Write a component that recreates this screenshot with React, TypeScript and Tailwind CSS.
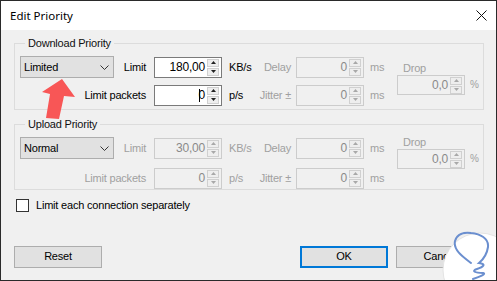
import React from "react";

const F = { fontFamily: '"Liberation Sans", Arial, sans-serif' };

function Arrow({ up, disabled }: { up?: boolean; disabled?: boolean }) {
  const c = disabled ? "#a8a8a8" : "#222";
  return (
    <div className="w-[12px] h-[8px] border border-[#d0d0d0] bg-[#eeeeee] flex items-center justify-center">
      <svg width="5" height="3" viewBox="0 0 5 3">
        {up ? <polygon points="2.5,0 5,3 0,3" fill={c} /> : <polygon points="0,0 5,0 2.5,3" fill={c} />}
      </svg>
    </div>
  );
}

function Spin({ value, disabled, caret, h = "h-[21px]" }: { value: string; disabled?: boolean; caret?: boolean; h?: string }) {
  return (
    <div
      className={`flex items-center w-[68px] ${h} border ${
        disabled ? "border-[#cccccc] bg-[#f0f0f0] text-[#8a8a8a]" : "border-[#7a7a7a] bg-white text-black"
      }`}
    >
      <span className="flex-1 flex justify-end items-center pr-[2px] text-[12px] leading-none tracking-[-0.2px]">
        {caret && <span className="w-[1px] h-[13px] bg-black mr-[-1px]" />}
        {value}
      </span>
      <div className="flex flex-col gap-[1px] mr-[2px]">
        <Arrow up disabled={disabled} />
        <Arrow disabled={disabled} />
      </div>
    </div>
  );
}

function Combo({ label }: { label: string }) {
  return (
    <div className="w-[94px] h-[22px] border border-[#adadad] bg-[#e1e1e1] flex items-center pl-[3px] pr-[4px] text-[11px]">
      <span className="flex-1">{label}</span>
      <svg width="9" height="5" viewBox="0 0 9 5">
        <polyline points="0.5,0.5 4.5,4.5 8.5,0.5" fill="none" stroke="#333" strokeWidth="1" />
      </svg>
    </div>
  );
}

function Group({
  title,
  combo,
  limit,
  enabled,
  caret,
  dropPt,
  rowGap,
  pb,
}: {
  title: string;
  combo: string;
  limit: string;
  enabled: boolean;
  caret?: boolean;
  dropPt: string;
  rowGap: string;
  pb: string;
}) {
  const lab = enabled ? "text-black" : "text-[#a0a0a0]";
  const dis = "text-[#a0a0a0]";
  return (
    <fieldset className={`mx-[13px] border border-[#dcdcdc] pl-[5px] pt-[6px] ${pb}`}>
      <legend className="ml-[5px] px-[3px] text-[11px] leading-[14px] text-[#111]">{title}</legend>
      <div
        className={`grid grid-cols-[94px_40px_68px_37px_37px_68px_33px_68px_18px] grid-rows-[22px_22px] ${rowGap} items-center text-[11px] leading-[14px] whitespace-nowrap`}
      >
        <div className="h-[22px] flex items-center">
          <Combo label={combo} />
        </div>
        <div className={`text-right pr-[8px] ${lab}`}>Limit</div>
        <Spin value={limit} disabled={!enabled} />
        <div className={`pl-[7px] ${lab}`}>KB/s</div>
        <div className={`text-right pr-[5px] ${dis}`}>Delay</div>
        <Spin value="0" disabled />
        <div className={`pl-[6px] ${dis}`}>ms</div>
        <div className={`row-span-2 self-start flex flex-col ${dropPt}`}>
          <div className={`pl-[6px] leading-[14px] ${dis}`}>Drop</div>
          <Spin value="0,0" disabled h="h-[20px]" />
        </div>
        <div className={`row-span-2 self-start flex flex-col ${dropPt}`}>
          <div className="h-[14px]" />
          <div className={`h-[20px] flex items-center pl-[5px] text-[10px] ${dis}`}>%</div>
        </div>

        <div className={`col-span-2 text-right pr-[8px] ${lab}`}>Limit packets</div>
        <Spin value="0" disabled={!enabled} caret={caret} />
        <div className={`pl-[7px] ${lab}`}>p/s</div>
        <div className={`text-right pr-[5px] ${dis}`}>Jitter ±</div>
        <Spin value="0" disabled />
        <div className={`pl-[6px] ${dis}`}>ms</div>
      </div>
    </fieldset>
  );
}

function Button({ label, primary }: { label: string; primary?: boolean }) {
  return (
    <div
      className={`w-[88px] h-[22px] flex items-center justify-center bg-[#e1e1e1] text-[11px] ${
        primary ? "border-2 border-[#0078d7]" : "border border-[#adadad]"
      }`}
    >
      {label}
    </div>
  );
}

export default function App() {
  return (
    <div
      className="relative w-[497px] h-[281px] overflow-hidden border border-[#2a2a2a] bg-[#f0f0f0] text-black"
      style={F}
    >
      <div className="h-[29px] bg-white flex items-center justify-between pl-[9px] pr-[9px]">
        <span className="text-[11.5px]" style={{ fontFamily: '"Noto Sans", "Liberation Sans", sans-serif' }}>
          Edit Priority
        </span>
        <svg width="11" height="11" viewBox="0 0 11 11">
          <line x1="0.5" y1="0.5" x2="10.5" y2="10.5" stroke="#111" strokeWidth="1" />
          <line x1="10.5" y1="0.5" x2="0.5" y2="10.5" stroke="#111" strokeWidth="1" />
        </svg>
      </div>
      <div className="pt-[6px] tracking-[-0.2px]">
        <Group
          title="Download Priority"
          combo="Limited"
          limit="180,00"
          enabled
          caret
          dropPt="pt-[5px]"
          rowGap="gap-y-[6px]"
          pb="pb-[3px]"
        />
        <div className="h-[7px]" />
        <Group
          title="Upload Priority"
          combo="Normal"
          limit="30,00"
          enabled={false}
          dropPt="mt-[-2px]"
          rowGap="gap-y-[8px]"
          pb="pb-0"
        />
        <div className="flex items-center ml-[15px] mt-[7px] gap-[7px] text-[11px]">
          <div className="w-[13px] h-[13px] border border-[#333] bg-white" />
          <span>Limit each connection separately</span>
        </div>
        <div className="flex items-center mt-[32px] pl-[13px] pr-[12px]">
          <Button label="Reset" />
          <div className="flex-1" />
          <Button label="OK" primary />
          <div className="w-[8px]" />
          <Button label="Cancel" />
        </div>
      </div>

      <svg className="absolute left-0 top-0 pointer-events-none" width="497" height="281" viewBox="0 0 497 281">
        <polygon points="61,78 74,96 63,95 58,118 45,117 49,93 41,91" fill="#f85656" />
        <circle cx="479" cy="269" r="37" fill="white" stroke="#e4e4e4" strokeWidth="1" />
        <path
          d="M470,262 C462,256 452,249 454,240 C456,233 463,231 470,232 C479,233 488,237 487,246 C486,253 484,257 478,262 C486,263 482,266 476,268 C470,270 474,272 482,272 C486,273 478,276 472,278"
          fill="none"
          stroke="#6b8fcf"
          strokeWidth="2"
          strokeLinecap="round"
        />
      </svg>
    </div>
  );
}
